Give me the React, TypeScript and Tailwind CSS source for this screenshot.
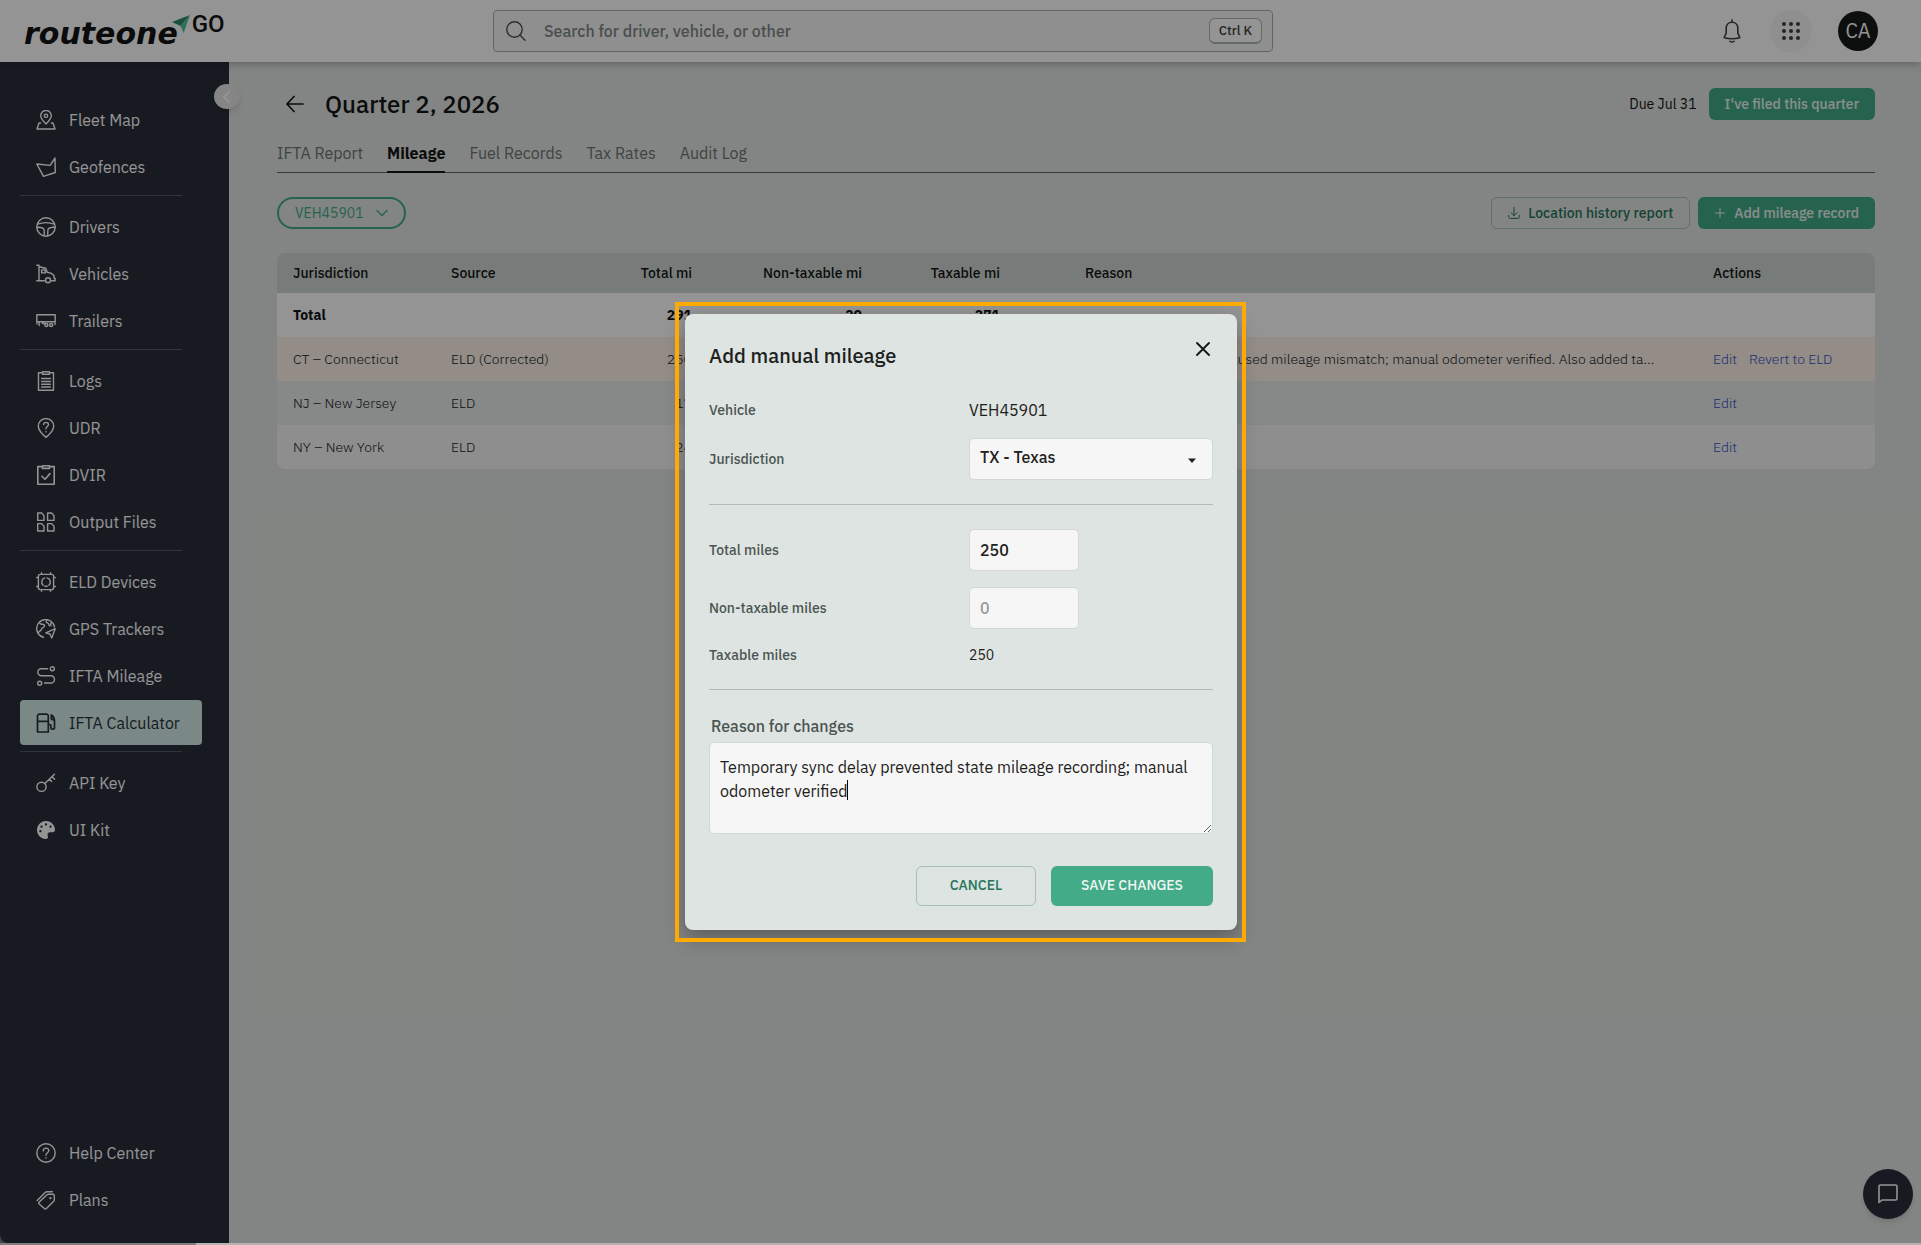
import { useState } from "react";
import { FaPalette } from "react-icons/fa";

type ChildrenProps = { children: React.ReactNode };

function Icon({ children, className = "w-5 h-5" }: ChildrenProps & { className?: string }) {
  return (
    <svg
      viewBox="0 0 20 20"
      className={`${className} shrink-0`}
      fill="none"
      stroke="currentColor"
      strokeWidth="1.4"
      strokeLinejoin="round"
      strokeLinecap="round"
      aria-hidden="true"
    >
      {children}
    </svg>
  );
}

const icons: Record<string, React.ReactNode> = {
  fleet: (
    <Icon>
      <path d="M10 14C7 11 4.7 8.600 4.700 5.800a5.300 5.300 0 0 1 10.600 0C15.300 8.600 13 11 10 14z" />
      <circle cx="10" cy="5.800" r="1.700" />
      <path d="M4.600 13H3L1 19h18l-2-6h-1.600" />
    </Icon>
  ),
  geofence: (
    <Icon>
      <path d="M.8 7l13.400 1.400L19 1l.3 14.500L7.500 19.300z" />
    </Icon>
  ),
  driver: (
    <Icon>
      <circle cx="10" cy="10" r="9.200" />
      <path d="M1.600 7.200C6.500 5.400 13.500 5.400 18.400 7.200M1 10.300c4-.2 6.500.5 7 2.300.4 1.600.3 4 .2 6.200M19 10.300c-4-.2-6.500.5-7 2.300-.4 1.600-.3 4-.2 6.200" />
    </Icon>
  ),
  vehicle: (
    <Icon>
      <path d="M.8 1.300H3v15.500M.8 16.800h7.500M3 2.800l6.800 1.500 1.400 4 3.600.8 3 2.200.5 3.200h.8v2.300h-3.600M5.600 5.900h3.200l.8 3h-4z" />
      <circle cx="12" cy="16.300" r="2.500" />
    </Icon>
  ),
  trailer: (
    <Icon>
      <path d="M.8 3.700h18.400v7H.8zM1 11v2M3.200 11v3.500M6.500 11v1.500h2M19 11v2.500" />
      <circle cx="10.400" cy="14" r="1.500" />
      <circle cx="15.200" cy="14" r="1.500" />
    </Icon>
  ),
  logs: (
    <Icon>
      <path d="M6.500 1.800H2.500v17.400h15V1.800h-4M6.500.8h7v2.400h-7zM5.600 7.500h8.800M5.600 10.500h8.800M5.600 13.300h8.800M5.600 16h8.800" />
    </Icon>
  ),
  udr: (
    <Icon>
      <path d="M10 19.400C6 16 2.300 12.500 2.300 8.300a7.700 7.700 0 0 1 15.400 0c0 4.200-3.700 7.700-7.700 11.100z" />
      <path d="M7.600 6.600c0-3 4.900-3 4.900 0 0 2-2.500 2-2.500 4.200M10 13.600v.3" />
    </Icon>
  ),
  dvir: (
    <Icon>
      <path d="M6.500 1.600H1.800v17.600h16.400V1.600h-4.700M6.500.8h7v2.600h-7zM6 11.200l3 3 5-5.600" strokeWidth="1.600" />
    </Icon>
  ),
  files: (
    <Icon>
      <path d="M1.700 1h4l2.300 2.600v4.800H1.700zM11.600 1h4l2.400 2.600v4.800h-6.400zM1.700 11.600h4L8 14.200V19H1.700zM11.600 11.600h4l2.400 2.600V19h-6.400z" />
    </Icon>
  ),
  chip: (
    <Icon>
      <rect x="2.400" y="2.400" width="15.200" height="15.200" rx="1.800" />
      <path d="M5.500 2.200V.7M14.500 2.200V.7M5.500 19.300v-1.500M14.500 19.300v-1.500M2.200 5.500H.7M2.200 14.500H.7M19.300 5.500h-1.500M19.300 14.500h-1.500M8.800 5.900a4.300 4.300 0 0 0-1.600 7.400M11.200 5.900a4.300 4.300 0 0 1 1.600 7.400M8.700 14.100a4.500 4.500 0 0 0 2.600 0" />
    </Icon>
  ),
  gps: (
    <Icon>
      <path d="M7.500 18.300A9 9 0 1 1 18.500 7.800M3.600 3.700c.6 1.500 1.200 1.600 2.700 1.500 1.700 0 2.500.8 2 2.200-.5 1.300-2.600 1.100-2.800 2.700-.2 1.500-1.300 1.900-3.800 3.600M10.500 1.200c-.6 2 .1 2.600 1.500 3 1 .4.8 2 1.300 2.600M15.700 3.200c-1 1-1.300 2.600-.6 3.600" />
      <path d="M19.200 9.700L9.800 13.800l4.100 1.200 1.800 4z" />
    </Icon>
  ),
  route: (
    <Icon>
      <circle cx="16.300" cy="2.800" r="2" />
      <circle cx="3.700" cy="17.200" r="2" />
      <path d="M11.500 2.800H5.300a3.500 3.500 0 0 0 0 7h9.600a3.600 3.600 0 0 1 0 7.200H8.500" />
    </Icon>
  ),
  fuel: (
    <Icon>
      <path d="M1.500 19V3a1.800 1.800 0 0 1 1.800-1.800h7.200A1.800 1.800 0 0 1 12.300 3v16zM1.500 8.300h10.800M12.300 11.500h1.400c1 0 1.200.7 1.200 1.500v1.600c0 2.200 3.600 2.200 3.600 0V7.500c0-2.500-1-4-3.200-5.500M15.400 2.500v3.600l3 1.500" strokeWidth="1.700" />
    </Icon>
  ),
  key: (
    <Icon>
      <circle cx="5.500" cy="13.800" r="4.600" />
      <path d="M8.800 10.500L18.500 1.300M13.400 6.200l2.300 2.400M16 3.700l2.600 2.600" />
    </Icon>
  ),
  palette: <FaPalette className="w-5 h-5 p-px shrink-0" />,
  help: (
    <Icon>
      <circle cx="10" cy="10" r="9.200" />
      <path d="M7.300 7.900c0-3.600 5.500-3.600 5.500-.3 0 2.200-2.800 2.200-2.800 4.600M10 14.700v.4" />
    </Icon>
  ),
  tags: (
    <Icon>
      <path d="M3 12.300L11 4.800c.4-.4.8-.6 1.400-.6h4.400c.9 0 1.500.6 1.500 1.500v4.200c0 .6-.2 1-.6 1.400l-7.300 7.300c-.6.6-1.400.6-2 0L3.200 14c-.5-.5-.6-1.200-.2-1.700zM1.200 10.500l8-8c.5-.5 1-.8 1.700-.8h5.500" />
      <circle cx="14.400" cy="8.100" r=".5" fill="currentColor" />
    </Icon>
  ),
};

const navGroups = [
  [
    { name: "Fleet Map", icon: "fleet" },
    { name: "Geofences", icon: "geofence" },
  ],
  [
    { name: "Drivers", icon: "driver" },
    { name: "Vehicles", icon: "vehicle" },
    { name: "Trailers", icon: "trailer" },
  ],
  [
    { name: "Logs", icon: "logs" },
    { name: "UDR", icon: "udr" },
    { name: "DVIR", icon: "dvir" },
    { name: "Output Files", icon: "files" },
  ],
  [
    { name: "ELD Devices", icon: "chip" },
    { name: "GPS Trackers", icon: "gps" },
    { name: "IFTA Mileage", icon: "route" },
    { name: "IFTA Calculator", icon: "fuel", active: true },
  ],
  [
    { name: "API Key", icon: "key" },
    { name: "UI Kit", icon: "palette" },
  ],
];

type NavItemProps = { name: string; icon: string; active?: boolean };
function NavItem({ name, icon, active }: NavItemProps) {
  return (
    <a
      href="#"
      className={`flex h-[45px] items-center gap-[13px] rounded px-4 text-base ${active ? "bg-[#d2ece5] text-[#292f3c]" : "text-white"}`}
    >
      {icons[icon]}
      {name}
    </a>
  );
}

function Sidebar() {
  return (
    <aside className="relative flex w-[229px] shrink-0 flex-col justify-between rounded-bl-lg bg-[#2a2e3c] pt-[35px] pr-[27px] pb-[21px] pl-5">
      <nav>
        {navGroups.map((group, idx) => (
          <div key={`group-${idx}`}>
            {idx > 0 && <hr className="mt-[6px] mr-5 mb-2 border-[#535a69]" />}
            <div className="flex flex-col gap-0.5">
              {group.map((item) => (
                <NavItem key={item.name} {...item} />
              ))}
            </div>
          </div>
        ))}
      </nav>
      <nav className="flex flex-col gap-0.5">
        <NavItem name="Help Center" icon="help" />
        <NavItem name="Plans" icon="tags" />
      </nav>
      <button
        aria-label="Collapse menu"
        className="absolute top-[22px] -right-[11px] flex h-[25px] w-[26px] items-center justify-center rounded-full bg-[#e4e5e4] text-white shadow-md"
      >
        <svg viewBox="0 0 12 12" className="w-3 h-3" fill="none" stroke="currentColor" strokeWidth="2" strokeLinecap="round">
          <path d="M8 1L3 6l5 5" />
        </svg>
      </button>
    </aside>
  );
}

function Logo() {
  return (
    <a href="#" aria-label="routeone GO" className="flex h-[34px] w-[493px] shrink-0 items-start pl-6 text-[#141414]">
      <span className="pt-1 font-['DejaVu_Sans',sans-serif] text-[30px] leading-8 font-bold italic">routeone</span>
      <svg viewBox="0 0 20 20" className="-ml-[7px] w-5 h-5 shrink-0" aria-hidden="true">
        <path d="M1 8L19 1 9.500 12z" fill="#2c8a69" />
        <path d="M19 1l-6.300 18-3.200-7z" fill="#4cc49b" />
      </svg>
      <span className="pl-px font-['Roboto'] text-2xl leading-5 font-medium">GO</span>
    </a>
  );
}

function Header() {
  return (
    <header className="relative z-10 flex h-[62px] items-center bg-white shadow-[0_2px_8px_rgba(0,0,0,0.25)]">
      <Logo />
      <div className="flex h-[42px] w-[780px] items-center rounded border border-[#acacac] bg-[#f6f6f6] pr-[10px] pl-3">
        <svg viewBox="0 0 20 20" className="w-5 h-5 shrink-0 text-[#4a5350]" fill="none" stroke="currentColor" strokeWidth="1.400" strokeLinecap="round">
          <circle cx="8.500" cy="8.500" r="7.700" />
          <path d="M14 14l5 5.300" />
        </svg>
        <input
          type="text"
          aria-label="Search"
          placeholder="Search for driver, vehicle, or other"
          className="min-w-0 flex-1 bg-transparent pl-[18px] text-base font-medium outline-none placeholder:text-[#7f8986]"
        />
        <kbd className="flex h-[26px] items-center rounded-md border border-b-2 border-[#a9b9b4] bg-white px-[9px] font-['IBM_Plex_Sans',Roboto,sans-serif] text-[13px] font-medium text-[#3c4341]">
          Ctrl K
        </kbd>
      </div>
      <div className="ml-auto flex items-center gap-6 pr-[43px] text-[#3c4341]">
        <button aria-label="Notifications" className="p-1">
          <svg viewBox="0 0 20 24" className="w-5 h-6" fill="none" stroke="currentColor" strokeWidth="1.600" strokeLinecap="round" strokeLinejoin="round">
            <path d="M10 3.200V1M10 3.200c-3.700 0-5.800 2.700-5.800 6v4.500c0 1.500-1.700 3-1.900 5 4.700 1.300 10.700 1.300 15.400 0-.2-2-1.900-3.500-1.900-5V9.200c0-3.300-2.100-6-5.800-6z" />
            <path d="M8 22.300c1.200.8 2.800.8 4 0" />
          </svg>
        </button>
        <button aria-label="Apps" className="flex h-[42px] w-[42px] items-center justify-center rounded-full bg-[#f6f6f6]">
          <svg viewBox="0 0 18 18" className="h-[18px] w-[18px]" fill="currentColor">
            {[2, 9, 16].map((y) => [2, 9, 16].map((x) => <circle key={`${x}-${y}`} cx={x} cy={y} r="2" />))}
          </svg>
        </button>
        <button className="ml-0.5 h-10 w-10 rounded-full bg-[#181a19] text-xl text-white">CA</button>
      </div>
    </header>
  );
}

const tabs = ["IFTA Report", "Mileage", "Fuel Records", "Tax Rates", "Audit Log"];

const rows = [
  {
    jurisdiction: "CT – Connecticut",
    source: "ELD (Corrected)",
    total: 250,
    nonTaxable: 20,
    taxable: 230,
    reason: "Temporary sync delay caused mileage mismatch; manual odometer verified. Also added taxable miles",
    bg: "bg-[#fdf1e9]",
    revert: true,
  },
  { jurisdiction: "NJ – New Jersey", source: "ELD", total: 17, nonTaxable: 0, taxable: 17, reason: "", bg: "bg-[#e7edea]", revert: false },
  { jurisdiction: "NY – New York", source: "ELD", total: 24, nonTaxable: 0, taxable: 24, reason: "", bg: "bg-[#f5f5f5]", revert: false },
];

function MileageTable() {
  return (
    <div className="overflow-hidden rounded-lg">
      <table className="w-full table-fixed text-sm text-[#141a1c]">
        <colgroup>
          <col className="w-[158px]" />
          <col className="w-[150px]" />
          <col className="w-[123px]" />
          <col className="w-[170px]" />
          <col className="w-[138px]" />
          <col />
          <col className="w-[178px]" />
        </colgroup>
        <thead>
          <tr className="h-10 bg-[#cdd6d2] text-left text-[#141414] *:px-4 *:font-medium">
            <th>Jurisdiction</th>
            <th>Source</th>
            <th className="text-right">Total mi</th>
            <th className="text-right">Non-taxable mi</th>
            <th className="text-right">Taxable mi</th>
            <th>
              <span className="pl-[53px]">Reason</span>
            </th>
            <th>Actions</th>
          </tr>
        </thead>
        <tbody>
          <tr className="h-11 bg-white font-bold text-[#141414] *:px-4">
            <td>Total</td>
            <td />
            <td className="text-right">291</td>
            <td className="text-right">20</td>
            <td className="text-right">271</td>
            <td />
            <td />
          </tr>
          {rows.map((row) => (
            <tr key={row.jurisdiction} className={`h-11 font-light *:px-4 ${row.bg}`}>
              <td>{row.jurisdiction}</td>
              <td>{row.source}</td>
              <td className="text-right">{row.total}</td>
              <td className="text-right">{row.nonTaxable}</td>
              <td className="text-right">{row.taxable}</td>
              <td>
                <div className="mr-5 ml-[53px] truncate">{row.reason}</div>
              </td>
              <td className="text-[#3451c4]">
                <a href="#">Edit</a>
                {row.revert && <a href="#" className="ml-3">Revert to ELD</a>}
              </td>
            </tr>
          ))}
        </tbody>
      </table>
    </div>
  );
}

function MileagePage() {
  return (
    <main className="min-w-0 flex-1 bg-[#e1e5e2] pt-[26px] pr-[46px] pl-12">
      <div className="flex h-8 items-center">
        <button aria-label="Back" className="ml-[9px] text-[#141414]">
          <svg viewBox="0 0 18 18" className="h-[18px] w-[18px]" fill="none" stroke="currentColor" strokeWidth="1.700" strokeLinecap="round" strokeLinejoin="round">
            <path d="M17 9H1M8 1.500L1 9l7 7.500" />
          </svg>
        </button>
        <h1 className="ml-[21px] text-2xl font-medium text-[#141414]">Quarter 2, 2026</h1>
        <span className="mr-3 ml-auto text-sm text-[#141414]">Due Jul 31</span>
        <button className="h-8 rounded-md bg-[#43ab87] px-4 text-sm font-medium text-[#eef6f3]">I've filed this quarter</button>
      </div>
      <div className="mt-[19px] flex h-[34px] gap-6 border-b border-[#5f6664] text-[#6c7572]">
        {tabs.map((tab) => (
          <button
            key={tab}
            className={`h-[34px] text-base ${tab === "Mileage" ? "border-b-2 border-[#141414] pb-1 font-bold text-[#141414]" : "pb-[6px]"}`}
          >
            {tab}
          </button>
        ))}
      </div>
      <div className="mt-6 flex items-center gap-2">
        <button className="mr-auto flex h-8 items-center gap-3 rounded-full border-2 border-[#43ab87] px-4 text-sm text-[#43ab87]">
          VEH45901
          <svg viewBox="0 0 12 12" className="w-3 h-3" fill="none" stroke="currentColor" strokeWidth="1.400" strokeLinecap="round" strokeLinejoin="round">
            <path d="M1 3.500l5 5 5-5" />
          </svg>
        </button>
        <button className="flex h-8 items-center gap-2 rounded-md border border-[#a3c1b7] px-4 text-sm font-medium text-[#27755a]">
          <svg viewBox="0 0 12 12" className="w-3 h-3" fill="none" stroke="currentColor" strokeLinecap="round" strokeLinejoin="round">
            <path d="M6 .5v8M3 5.700l3 3 3-3M.6 8.500v1.300c0 1 .6 1.600 1.600 1.600h7.600c1 0 1.600-.6 1.600-1.600V8.500" />
          </svg>
          Location history report
        </button>
        <button className="flex h-8 items-center gap-2 rounded-md bg-[#43ab87] px-4 text-sm font-medium text-[#eef6f3]">
          <svg viewBox="0 0 12 12" className="w-3 h-3" fill="none" stroke="currentColor" strokeLinecap="round">
            <path d="M6 1.500v9M1.500 6h9" />
          </svg>
          Add mileage record
        </button>
      </div>
      <div className="mt-6">
        <MileageTable />
      </div>
    </main>
  );
}

const fieldClass = "rounded-[5px] border border-[#d3d7dd] bg-[#f6f6f6] px-[10px] text-base text-[#1d2120] outline-none";

function Field({ label, htmlFor, children, className = "" }: ChildrenProps & { label: string; htmlFor: string; className?: string }) {
  return (
    <div className={`flex items-center ${className}`}>
      <label htmlFor={htmlFor} className="w-[260px] text-sm font-medium text-[#4c5452]">
        {label}
      </label>
      {children}
    </div>
  );
}

function AddMileageDialog() {
  const [total, setTotal] = useState("250");
  const [nonTaxable, setNonTaxable] = useState("");
  const [reason, setReason] = useState("Temporary sync delay prevented state mileage recording; manual odometer verified");

  return (
    <div className="relative py-3 pr-[9px] pl-[10px]">
      <div
        role="dialog"
        aria-labelledby="dialog-title"
        className="relative w-[552px] rounded-lg bg-[#dde4e1] p-6 shadow-[0_8px_20px_rgba(0,0,0,0.3)]"
      >
        <button aria-label="Close" className="absolute top-6 right-[23px] p-1 text-[#141414]">
          <svg viewBox="0 0 14 14" className="h-[14px] w-[14px]" fill="none" stroke="currentColor" strokeWidth="1.800" strokeLinecap="round">
            <path d="M1 1l12 12M13 1L1 13" />
          </svg>
        </button>
        <h2 id="dialog-title" className="pt-0.5 text-xl leading-8 font-medium text-[#1d2120]">
          Add manual mileage
        </h2>
        <Field label="Vehicle" htmlFor="vehicle" className="mt-[26px] h-6">
          <output id="vehicle" className="text-base text-[#1d2120]">VEH45901</output>
        </Field>
        <Field label="Jurisdiction" htmlFor="jurisdiction" className="mt-4">
          <div className="relative flex-1">
            <select id="jurisdiction" className={`h-[42px] w-full appearance-none pb-1 font-medium ${fieldClass}`}>
              <option>TX - Texas</option>
            </select>
            <svg viewBox="0 0 8 5" className="pointer-events-none absolute top-5 right-[17px] h-[5px] w-2" fill="#1d2120">
              <path d="M0 .5h8L4 5z" />
            </svg>
          </div>
        </Field>
        <hr className="my-6 border-[#b1bbb7]" />
        <Field label="Total miles" htmlFor="total">
          <input id="total" value={total} onChange={(e) => setTotal(e.target.value)} className={`h-[42px] w-[110px] font-medium ${fieldClass}`} />
        </Field>
        <Field label="Non-taxable miles" htmlFor="non-taxable" className="mt-4">
          <input
            id="non-taxable"
            placeholder="0"
            value={nonTaxable}
            onChange={(e) => setNonTaxable(e.target.value)}
            className={`h-[42px] w-[110px] font-medium placeholder:text-[#9b9b9b] ${fieldClass}`}
          />
        </Field>
        <Field label="Taxable miles" htmlFor="taxable" className="mt-4 h-5">
          <output id="taxable" className="text-sm text-[#1d2120]">{Number(total) - Number(nonTaxable)}</output>
        </Field>
        <hr className="my-6 border-[#b1bbb7]" />
        <label htmlFor="reason" className="block pl-0.5 text-base font-medium text-[#4c5452]">
          Reason for changes
        </label>
        <div className="relative mt-1">
          <textarea
            id="reason"
            value={reason}
            onChange={(e) => setReason(e.target.value)}
            className={`block h-[92px] w-full resize-y py-3 leading-6 ${fieldClass}`}
          />
          {/* text caret */}
          <span className="absolute top-[38px] left-[138px] h-5 w-px bg-black" />
        </div>
        <div className="mt-8 flex justify-end gap-[15px] text-sm">
          <button className="h-10 w-[120px] rounded-md border border-[#a3c1b7] pb-0.5 font-medium text-[#27755a]">CANCEL</button>
          <button className="h-10 w-[162px] rounded-md bg-[#43ab87] pb-0.5 font-medium text-[#eef6f3]">SAVE CHANGES</button>
        </div>
      </div>
      {/* highlight frame, painted above the dialog shadow */}
      <div className="pointer-events-none absolute inset-0 border-4 border-[#ffaa00]" />
    </div>
  );
}

export default function App() {
  return (
    <div className="flex h-screen flex-col bg-[#7d7d7d] font-['IBM_Plex_Sans',Roboto,sans-serif]">
      <div className="relative flex min-h-0 flex-1 flex-col">
        <Header />
        <div className="flex min-h-0 flex-1">
          <Sidebar />
          <MileagePage />
        </div>
        <button
          aria-label="Open chat"
          className="absolute right-2 bottom-6 flex h-[50px] w-[50px] items-center justify-center rounded-full bg-[#2a2e3c] text-white shadow-md"
        >
          <svg viewBox="0 0 20 20" className="w-5 h-5" fill="none" stroke="currentColor" strokeWidth="1.600" strokeLinejoin="round">
            <path d="M1 18.500V2.500C1 1.600 1.600 1 2.500 1h15c.9 0 1.500.6 1.500 1.500v12c0 .9-.6 1.500-1.500 1.500H4z" />
          </svg>
        </button>
        {/* backdrop */}
        <div className="absolute inset-0 z-20 flex items-center justify-center bg-black/42 pt-px">
          <AddMileageDialog />
        </div>
      </div>
      <div className="flex h-0.5">
        <div className="w-[196px]" />
        <div className="flex-1 bg-[#b4b4b4]" />
      </div>
    </div>
  );
}
